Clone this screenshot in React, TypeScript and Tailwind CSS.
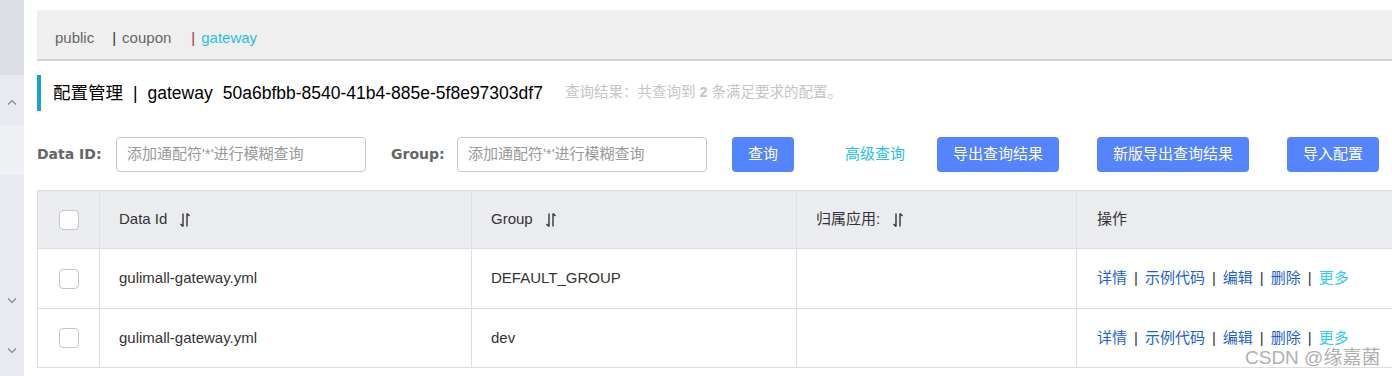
import React from 'react';

const font = { fontFamily: '"Liberation Sans", "Noto Sans CJK SC", sans-serif' };
const labelFont = { fontFamily: '"DejaVu Sans", "Noto Sans CJK SC", sans-serif' };

function SortIcon() {
  return (
    <svg width="12" height="16" viewBox="0 0 12 16" className="inline-block ml-3">
      <path d="M4 1.5V14.5M4 14.5L1.5 12" stroke="#333" strokeWidth="1.4" fill="none" />
      <path d="M8 14.5V1.5M8 1.5L10.5 4" stroke="#333" strokeWidth="1.4" fill="none" />
    </svg>
  );
}

function Chevron({ up }: { up?: boolean }) {
  return (
    <svg width="10" height="6" viewBox="0 0 10 6">
      <path d={up ? 'M1 5.5L5 1.5L9 5.5' : 'M1 0.5L5 4.5L9 0.5'} stroke="#7f8591" strokeWidth="1.1" fill="none" />
    </svg>
  );
}

function Checkbox() {
  return <div className="w-5 h-5 rounded-[4px] border border-[#c4c6cf] bg-white" />;
}

const rows = [
  { id: 'gulimall-gateway.yml', group: 'DEFAULT_GROUP' },
  { id: 'gulimall-gateway.yml', group: 'dev' },
];

const ops = ['详情', '示例代码', '编辑', '删除'];

export default function App() {
  return (
    <div className="relative flex w-[1392px] h-[376px] bg-white overflow-hidden text-[#333]" style={font}>
      {/* Sidebar strip */}
      <div className="w-6 shrink-0 flex flex-col bg-[#e8eaef]">
        <div className="h-[75px] bg-[#dcdfe6]" />
        <div className="h-[50px] flex items-center justify-center pt-[4px]"><Chevron up /></div>
        <div className="h-[50px] bg-[#eff0f4]" />
        <div className="h-[122px]" />
        <div className="h-[8px] flex items-center justify-center"><Chevron /></div>
        <div className="h-[42px]" />
        <div className="h-[8px] flex items-center justify-center"><Chevron /></div>
      </div>

      {/* Main */}
      <div className="flex-1 pl-[13px] pt-[10px]">
        {/* Namespace tabs */}
        <div className="h-[51px] bg-[#efefef] border-b-2 border-[#d4d4d4] flex items-center pl-[18px] pt-[7px] text-[15px]">
          <span className="text-[#666]">public</span>
          <span className="ml-[18px] text-[#333]">|</span>
          <span className="ml-[6px] text-[#666]">coupon</span>
          <span className="ml-[20px] text-[#a5372a]">|</span>
          <span className="ml-[6px] text-[#1fc3e0]">gateway</span>
        </div>

        {/* Title */}
        <div className="mt-[14px] h-[36px] flex items-center border-l-4 border-[#1a9fd6] pl-[12px] text-[17.5px] text-black">
          <span>配置管理</span>
          <span className="ml-[10px]">|</span>
          <span className="ml-[10px]">gateway</span>
          <span className="ml-[10px]">50a6bfbb-8540-41b4-885e-5f8e97303df7</span>
          <span className="text-[14.5px] text-[#c5c5c5] ml-[22px]">
            查询结果：共查询到 <b className="font-bold">2</b> 条满足要求的配置。
          </span>
        </div>

        {/* Search row */}
        <div className="mt-[26px] h-[35px] flex items-center text-[15px]">
          <span className="font-bold text-[#666] w-[79px] text-[14px]" style={labelFont}>Data ID:</span>
          <div className="w-[250px] h-[35px] border border-[#c4c6cf] rounded-[4px] flex items-center px-[10px] text-[#999]">添加通配符'*'进行模糊查询</div>
          <span className="ml-[25px] w-[66px] font-bold text-[#666] text-[14px]" style={labelFont}>Group:</span>
          <div className="w-[250px] h-[35px] border border-[#c4c6cf] rounded-[4px] flex items-center px-[10px] text-[#999]">添加通配符'*'进行模糊查询</div>
          <button className="ml-[25px] w-[62px] h-[35px] rounded-[4px] bg-[#5584ff] text-white">查询</button>
          <span className="ml-[51px] text-[#1fc3e0]">高级查询</span>
          <button className="ml-[32px] w-[122px] h-[35px] rounded-[4px] bg-[#5584ff] text-white">导出查询结果</button>
          <button className="ml-[38px] w-[152px] h-[35px] rounded-[4px] bg-[#5584ff] text-white">新版导出查询结果</button>
          <button className="ml-[38px] w-[92px] h-[35px] rounded-[4px] bg-[#5584ff] text-white">导入配置</button>
        </div>

        {/* Table */}
        <div className="mt-[18px] w-[1420px] border-l border-b border-[#dcdee3] text-[15px]">
          <div className="h-[59px] flex bg-[#ebecf0] border-t border-b border-[#dcdee3]">
            <div className="w-[62px] border-r border-[#dcdee3] flex items-center justify-center"><Checkbox /></div>
            <div className="w-[372px] border-r border-[#dcdee3] flex items-center pl-[19px]">Data Id<SortIcon /></div>
            <div className="w-[325px] border-r border-[#dcdee3] flex items-center pl-[19px]">Group<SortIcon /></div>
            <div className="w-[280px] border-r border-[#dcdee3] flex items-center pl-[19px]">归属应用:<SortIcon /></div>
            <div className="flex-1 flex items-center pl-[20px]">操作</div>
          </div>
          {rows.map((r, i) => (
            <div key={i} className={`h-[59px] flex ${i > 0 ? 'border-t border-[#dcdee3]' : ''}`}>
              <div className="w-[62px] border-r border-[#dcdee3] flex items-center justify-center"><Checkbox /></div>
              <div className="w-[372px] border-r border-[#dcdee3] flex items-center pl-[19px]">{r.id}</div>
              <div className="w-[325px] border-r border-[#dcdee3] flex items-center pl-[19px]">{r.group}</div>
              <div className="w-[280px] border-r border-[#dcdee3]" />
              <div className="flex-1 flex items-center pl-[20px] gap-[7px]">
                {ops.map(op => (
                  <React.Fragment key={op}>
                    <span className="text-[#1f5fd6]">{op}</span>
                    <span className="text-[#333]">|</span>
                  </React.Fragment>
                ))}
                <span className="text-[#33cde5]">更多</span>
              </div>
            </div>
          ))}
        </div>
      </div>

      {/* Watermark */}
      <div className="absolute left-[1245px] top-[344px] text-[19px] text-[#a8a8a8] opacity-90">CSDN @缘嘉菌</div>
    </div>
  );
}
